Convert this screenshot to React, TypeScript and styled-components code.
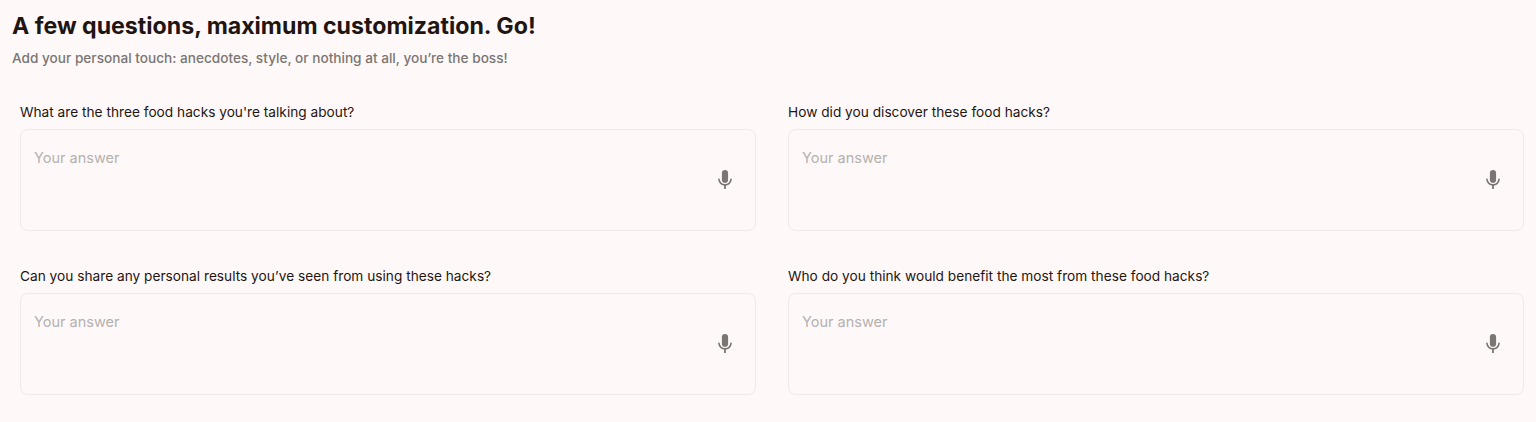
import React from "react";
import styled, { createGlobalStyle } from "styled-components";

const Global = createGlobalStyle`
  html, body { margin: 0; padding: 0; background: #fef9f8; }
  body { font-family: Inter, "Liberation Sans", sans-serif; }
`;

const Page = styled.main`
  height: 422px;
  box-sizing: border-box;
  padding: 12px 12px 0;
  background: #fef9f8;
  overflow: hidden;
`;

const Title = styled.h1`
  margin: 0;
  font-size: 23.15px;
  line-height: 28px;
  font-weight: 700;
  color: #1f1512;
`;

const Subtitle = styled.p`
  margin: 8px 0 0;
  font-size: 13.63px;
  line-height: 20px;
  font-weight: 500;
  color: #7a7674;
`;

const Grid = styled.div`
  display: grid;
  grid-template-columns: 736px 736px;
  column-gap: 32px;
  row-gap: 35px;
  margin-top: 34px;
  padding-left: 8px;
`;

const Field = styled.label`
  display: flex;
  flex-direction: column;
  gap: 7px;
`;

const Question = styled.span`
  font-size: 13.7px;
  line-height: 20px;
  font-weight: 400;
  color: #1f1512;
`;

const InputBox = styled.div`
  display: flex;
  align-items: center;
  height: 102px;
  box-sizing: border-box;
  padding-right: 23px;
  border: 1px solid #efeae9;
  border-radius: 8px;
  background: #fef9f8;
`;

const Answer = styled.textarea`
  flex: 1;
  align-self: stretch;
  padding: 18px 13px 0;
  border: 0;
  outline: 0;
  resize: none;
  background: transparent;
  font: 400 14.5px/20px Inter, "Liberation Sans", sans-serif;
  color: #1f1512;
  &::placeholder { color: #b4b1b0; opacity: 1; }
`;

const MicIcon = styled.svg`
  flex: none;
  width: 14px;
  height: 19px;
  margin-bottom: 1px;
  color: #7a7674;
`;

const Mic = () => (
  <MicIcon viewBox="0 0 14 19" aria-hidden="true">
    <rect x="3.9" y="0" width="6.2" height="12.8" rx="3.1" fill="currentColor" />
    <path d="M0.9 9.2C1.4 12.6 3.8 14.9 7 14.9S12.6 12.6 13.1 9.2" fill="none" stroke="currentColor" strokeWidth="1.6" strokeLinecap="round" />
    <path d="M7 14.9V19" fill="none" stroke="currentColor" strokeWidth="1.8" />
  </MicIcon>
);

const questions = [
  "What are the three food hacks you're talking about?",
  "How did you discover these food hacks?",
  "Can you share any personal results you’ve seen from using these hacks?",
  "Who do you think would benefit the most from these food hacks?",
];

export default function App() {
  return (
    <Page>
      <Global />
      <Title>A few questions, maximum customization. Go!</Title>
      <Subtitle>Add your personal touch: anecdotes, style, or nothing at all, you’re the boss!</Subtitle>
      <Grid>
        {questions.map((q) => (
          <Field key={q}>
            <Question>{q}</Question>
            <InputBox>
              <Answer placeholder="Your answer" />
              <Mic />
            </InputBox>
          </Field>
        ))}
      </Grid>
    </Page>
  );
}
